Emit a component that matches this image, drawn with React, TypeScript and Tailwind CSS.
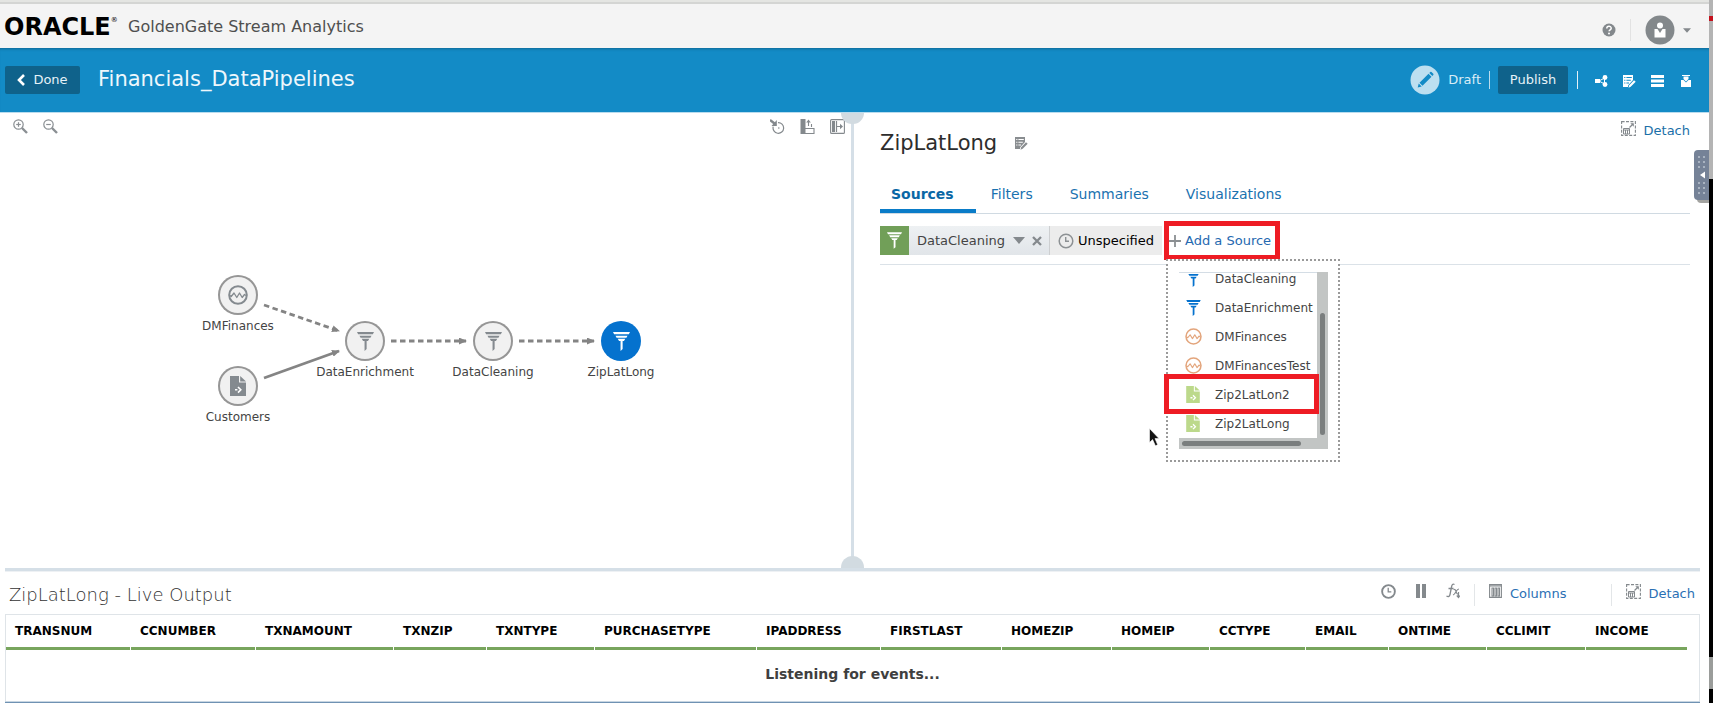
import type { ReactNode } from 'react';

type NodeKind = 'stream' | 'query' | 'file';

type PipelineNode = {
  label: string;
  kind: NodeKind;
  place: string;
  active?: boolean;
};

const nodes: PipelineNode[] = [
  { label: 'DMFinances', kind: 'stream', place: 'left-[178px] top-[162px]' },
  { label: 'Customers', kind: 'file', place: 'left-[178px] top-[253px]' },
  { label: 'DataEnrichment', kind: 'query', place: 'left-[305px] top-[208px]' },
  { label: 'DataCleaning', kind: 'query', place: 'left-[433px] top-[208px]' },
  { label: 'ZipLatLong', kind: 'query', place: 'left-[561px] top-[208px]', active: true },
];

const tabs = ['Sources', 'Filters', 'Summaries', 'Visualizations'];

const sources: { name: string; kind: NodeKind }[] = [
  { name: 'DataCleaning', kind: 'query' },
  { name: 'DataEnrichment', kind: 'query' },
  { name: 'DMFinances', kind: 'stream' },
  { name: 'DMFinancesTest', kind: 'stream' },
  { name: 'Zip2LatLon2', kind: 'file' },
  { name: 'Zip2LatLong', kind: 'file' },
];

const columns = [
  { name: 'TRANSNUM', share: 125 },
  { name: 'CCNUMBER', share: 125 },
  { name: 'TXNAMOUNT', share: 138 },
  { name: 'TXNZIP', share: 93 },
  { name: 'TXNTYPE', share: 108 },
  { name: 'PURCHASETYPE', share: 162 },
  { name: 'IPADDRESS', share: 124 },
  { name: 'FIRSTLAST', share: 121 },
  { name: 'HOMEZIP', share: 110 },
  { name: 'HOMEIP', share: 98 },
  { name: 'CCTYPE', share: 96 },
  { name: 'EMAIL', share: 83 },
  { name: 'ONTIME', share: 98 },
  { name: 'CCLIMIT', share: 99 },
  { name: 'INCOME', share: 102 },
];
const shareTotal = columns.reduce((sum, c) => sum + c.share, 0);

function Funnel({ className }: { className: string }) {
  return (
    <svg viewBox="0 0 18 20" className={className} fill="currentColor" aria-hidden="true">
      <path d="M0 0h18l-1.2 2.4H1.2zM2.6 3.8h12.8l-1.2 2.2H3.8zM5 7.2h8l-1.4 2.2h-1.4V18l-2.2 2V9.4H6.4z" />
    </svg>
  );
}

function Wave({ className, ring = 2 }: { className: string; ring?: number }) {
  return (
    <svg viewBox="0 0 20 20" className={className} fill="none" stroke="currentColor" aria-hidden="true">
      <circle cx="10" cy="10" r="8.8" strokeWidth={ring} />
      <path d="M2 10.5l1.2 1 2.8-3.5 2.8 4.5 2.7-4.5 2.7 4.5 2.3-3 1.5 1" strokeWidth="1.3" strokeLinejoin="round" />
    </svg>
  );
}

function FileMark({ className }: { className: string }) {
  return (
    <svg viewBox="0 0 16 20" className={className} aria-hidden="true">
      <path d="M0 0h9v6.5h7V20H0z" fill="currentColor" />
      <path d="M10.2 0L16 5.4h-5.8z" fill="currentColor" />
      <path d="M5 13.8h2.400M8 11l2.800 2.800L8 16.600" fill="none" stroke="#fff" strokeWidth="1.6" />
    </svg>
  );
}

function Clock({ className, ring = 1.5 }: { className: string; ring?: number }) {
  return (
    <svg viewBox="0 0 16 16" className={className} fill="none" stroke="currentColor" aria-hidden="true">
      <circle cx="8" cy="8" r="6.8" strokeWidth={ring} />
      <path d="M7.7 4v4.300H11" strokeWidth="1.4" />
    </svg>
  );
}

function Caret({ className }: { className: string }) {
  return (
    <svg viewBox="0 0 12 7" className={className} fill="currentColor" aria-hidden="true">
      <path d="M0 0h12L6 7z" />
    </svg>
  );
}

function Magnifier({ plus }: { plus?: boolean }) {
  return (
    <svg viewBox="0 0 15 15" className="size-[15px]" fill="none" stroke="#8a8f93" aria-hidden="true">
      <circle cx="5.5" cy="5.5" r="4.7" strokeWidth="1.2" />
      <path d="M3.200 5.500h4.600" strokeWidth="1.2" />
      {plus && <path d="M5.500 3.200v4.600" strokeWidth="1.2" />}
      <path d="M9 9l5 5" strokeWidth="2.4" />
    </svg>
  );
}

function DetachMark() {
  return (
    <svg viewBox="0 0 15 15" className="size-[15px]" fill="none" stroke="#84898d" aria-hidden="true">
      <rect x=".6" y=".6" width="13.8" height="13.8" strokeWidth="1.1" strokeDasharray="3 1.4" />
      <path d="M2.500 7.500h6v5.500h-6zM2.500 9h6M4.500 9v4M6.500 9v4" strokeWidth="1" />
      <path d="M8.500 6.500L12 3" strokeWidth="1.3" />
      <path d="M9.300 2.300h3.500v3.500z" fill="#84898d" stroke="none" />
    </svg>
  );
}

function NoteEdit({ className }: { className: string }) {
  return (
    <svg viewBox="0 0 13 13" className={className} aria-hidden="true">
      <path fillRule="evenodd" fill="currentColor" d="M0 0h10v5L5 10.500V12H0zM1.200 2v1h1.200V2zM3.400 2v1h5.400V2zM1.200 4.800v1h1.200v-1zM3.400 4.800v1h4.400v-1zM1.200 7.600v1h1.200v-1zM3.400 7.600v1H6v-1z" />
      <path fill="currentColor" d="M11 5.200l1.700 1.600-5 5-2.200.9.700-2.400z" />
    </svg>
  );
}

function IconButton({ label, className = '', children }: { label: string; className?: string; children: ReactNode }) {
  return (
    <button type="button" aria-label={label} className={`flex shrink-0 items-center justify-center ${className}`}>
      {children}
    </button>
  );
}

function Header() {
  return (
    <header className="flex h-11 items-center justify-between bg-[#f4f4f4] pr-[18px] pl-1">
      <div className="flex items-center pt-[2px]">
        <div className="flex w-[124px] items-start text-black">
          <span className="text-[24px] leading-6 font-bold">ORACLE</span>
          <span className="text-[7px] leading-[10px]">®</span>
        </div>
        <span className="text-[16px] leading-6 text-[#4f4f4f]">GoldenGate Stream Analytics</span>
      </div>
      <div className="flex items-center pt-2">
        <IconButton label="Help">
          <svg viewBox="0 0 14 14" className="size-[14px]" aria-hidden="true">
            <circle cx="7" cy="7" r="6.5" fill="#83888c" />
            <path d="M4.800 5.500c0-3 4.400-2.800 4.400-.3 0 1.700-2.100 1.500-2.100 3.100" fill="none" stroke="#fff" strokeWidth="1.5" />
            <circle cx="7" cy="10.5" r="1" fill="#fff" />
          </svg>
        </IconButton>
        <span className="mx-[14px] h-[22px] w-px bg-[#e2e2e2]" />
        <button type="button" aria-label="Account" className="flex items-center gap-2 text-[#84898c]">
          <svg viewBox="0 0 30 30" className="size-[30px]" aria-hidden="true">
            <circle cx="15" cy="15" r="14.5" fill="#83888b" />
            <circle cx="15" cy="10.5" r="3" fill="#fff" />
            <path d="M9.500 14h3l2.500 4 2.500-4h3v8.500h-11z" fill="#fff" />
          </svg>
          <Caret className="h-[5px] w-2" />
        </button>
      </div>
    </header>
  );
}

function TitleBar() {
  return (
    <div className="flex h-[65px] items-center justify-between border-b border-[#b9dcee] bg-[#138bc6] pr-4 pl-[5px] text-white shadow-[inset_0_3px_3px_-2px_rgba(0,0,0,0.25)]">
      <div className="flex items-center gap-[18px]">
        <button type="button" className="flex h-7 w-[75px] items-center justify-center gap-2 rounded-[2px] bg-[#0f628b] text-[13px] leading-4 text-[#e6f2f8]">
          <svg viewBox="0 0 8 12" className="h-3 w-2" fill="none" stroke="#fff" strokeWidth="2.6" aria-hidden="true">
            <path d="M7 1L2 6l5 5" />
          </svg>
          Done
        </button>
        <h1 className="pb-[2px] text-[21px] leading-7 text-[#eef7fc]">Financials_DataPipelines</h1>
      </div>
      <div className="flex items-center">
        <svg viewBox="0 0 30 30" className="size-[30px]" aria-hidden="true">
          <circle cx="15" cy="15" r="14.5" fill="#bcdff0" />
          <path d="M18.500 8.700l3 3-9 9-3-3zM19.300 7.900l1-1q.6-.5 1.200 0l1.800 1.800q.5.600 0 1.200l-1 1zM8.700 18.500l3 3-4 1z" fill="#138bc6" />
        </svg>
        <span className="ml-2 text-[13px] leading-4 text-[#d9edf7]">Draft</span>
        <span className="ml-2 h-[18px] w-px bg-[#b9dcee]" />
        <button type="button" className="ml-2 h-7 w-[70px] rounded-[2px] bg-[#0f628b] text-[13px] leading-4 text-[#e6f2f8]">
          Publish
        </button>
        <span className="mr-[17px] ml-[9px] h-[18px] w-px bg-[#e3f1f8]" />
        <div className="flex items-center gap-[15px] pt-[2px]">
          <IconButton label="Topology">
            <svg viewBox="0 0 13 12" className="h-3 w-[13px]" fill="#fff" aria-hidden="true">
              <path d="M0 4h5v4H0z" />
              <path d="M4 6l5.500-3M4 6l5.500 3M9.500 3v6" stroke="#fff" strokeWidth="1" fill="none" />
              <circle cx="10" cy="2.5" r="2.4" />
              <circle cx="10" cy="9.5" r="2.4" />
            </svg>
          </IconButton>
          <IconButton label="Edit notes">
            <NoteEdit className="size-[13px]" />
          </IconButton>
          <IconButton label="List">
            <svg viewBox="0 0 13 12" className="h-3 w-[13px]" fill="#fff" aria-hidden="true">
              <path d="M0 0h13v3H0zM0 4.500h13v3H0zM0 9h13v3H0z" />
            </svg>
          </IconButton>
          <IconButton label="Archive">
            <svg viewBox="0 0 10 12" className="mx-[2px] h-3 w-[10px]" fill="#fff" aria-hidden="true">
              <path d="M1 0h8v1H1zM2.500 1.500h5V4l-2.500 2.500L2.500 4zM0 5h2.500L5 7.500 7.500 5H10v7H0z" />
            </svg>
          </IconButton>
        </div>
      </div>
    </div>
  );
}

function Pipeline() {
  return (
    <section aria-label="Pipeline" className="relative">
      <div className="flex justify-between pt-[6px] pr-[6px] pl-[13px]">
        <div className="flex gap-[15px]">
          <IconButton label="Zoom in">
            <Magnifier plus />
          </IconButton>
          <IconButton label="Zoom out">
            <Magnifier />
          </IconButton>
        </div>
        <div className="flex gap-[15px] text-[#84898d]">
          <IconButton label="Reset view">
            <svg viewBox="0 0 15 15" className="size-[15px]" fill="none" stroke="currentColor" aria-hidden="true">
              <path d="M8 3.700a5.300 5.300 0 1 1-4.800 4" strokeWidth="1.2" />
              <path d="M0 1l4.500 3.500" strokeWidth="2.4" />
              <path d="M6.800 1v6H1.500z" fill="currentColor" stroke="none" />
              <circle cx="8.8" cy="9" r=".8" fill="currentColor" stroke="none" />
            </svg>
          </IconButton>
          <IconButton label="Align">
            <svg viewBox="0 0 15 15" className="size-[15px]" fill="none" stroke="currentColor" aria-hidden="true">
              <path d="M.5 0H5.500v15H.5z" fill="currentColor" stroke="none" />
              <path d="M5 9.500h9v5H5M8.500 2v5M11.500 5v3" strokeWidth="1.1" />
              <path d="M8.500.5l2.300 3H6.200z" fill="currentColor" stroke="none" />
            </svg>
          </IconButton>
          <IconButton label="Collapse panel">
            <svg viewBox="0 0 15 15" className="size-[15px]" fill="none" stroke="currentColor" aria-hidden="true">
              <rect x=".6" y=".6" width="13.8" height="13.8" rx="1" strokeWidth="1.1" />
              <path d="M2 2h3v11H2z" fill="currentColor" stroke="none" />
              <path d="M6.500 2v11M7 7.500h4" strokeWidth="1.2" />
              <path d="M10 4.800l3 2.700-3 2.700z" fill="currentColor" stroke="none" />
            </svg>
          </IconButton>
        </div>
      </div>

      <svg className="absolute top-0 left-0 h-[400px] w-[700px]" viewBox="0 0 700 400" fill="none" stroke="#848484" strokeWidth="2.8" aria-hidden="true">
        <defs>
          <marker id="arrow" viewBox="0 0 8 7" refX="7" refY="3.5" markerWidth="8" markerHeight="7" markerUnits="userSpaceOnUse" orient="auto">
            <path d="M0 0l8 3.500L0 7z" fill="#848484" stroke="none" />
          </marker>
        </defs>
        <path d="M264 192l75 26" strokeDasharray="5.5 3.5" markerEnd="url(#arrow)" />
        <path d="M264 265l75-27" markerEnd="url(#arrow)" />
        <path d="M391 228h75" strokeDasharray="5.5 3.5" markerEnd="url(#arrow)" />
        <path d="M519 228h75" strokeDasharray="5.5 3.5" markerEnd="url(#arrow)" />
      </svg>

      {nodes.map((node) => (
        <button key={node.label} type="button" className={`absolute flex w-[120px] flex-col items-center gap-[3px] ${node.place}`}>
          <span
            className={
              node.active
                ? 'flex size-10 items-center justify-center rounded-full bg-[#0572ce] text-white'
                : 'flex size-10 items-center justify-center rounded-full bg-[#f1f1f1] text-[#848a8f] ring-2 ring-[#868686]/85 ring-inset'
            }
          >
            {node.kind === 'query' && <Funnel className="h-[19px] w-[17px]" />}
            {node.kind === 'stream' && <Wave className="size-5" />}
            {node.kind === 'file' && <FileMark className="h-5 w-4" />}
          </span>
          <span className="text-[12px] leading-4 whitespace-nowrap text-[#444]">{node.label}</span>
        </button>
      ))}
    </section>
  );
}

function SourceMenu() {
  return (
    <div className="absolute top-[38px] left-[2px] z-10 w-[174px] border-2 border-dotted border-[#9a9a9a] bg-white p-[11px] pr-[10px]">
      <div className="flex">
        <ul className="flex h-[166px] min-w-0 flex-1 flex-col justify-end overflow-hidden border-t border-[#d4dde5]">
          {sources.map((source) => (
            <li key={source.name} className="shrink-0">
              <button type="button" className="flex h-[29px] w-full items-center text-[12px] leading-4 text-[#444]">
                <span className="mr-2 flex w-7 shrink-0 items-center justify-center">
                  {source.kind === 'query' && <Funnel className="h-4 w-[15px] text-[#0572ce]" />}
                  {source.kind === 'stream' && <Wave className="size-[17px] text-[#e3a57c]" ring={1.8} />}
                  {source.kind === 'file' && <FileMark className="h-[17px] w-[14px] text-[#bcd98b]" />}
                </span>
                {source.name}
              </button>
            </li>
          ))}
        </ul>
        <div className="flex w-[11px] items-end justify-center bg-[#c2c5c4] pb-[3px]">
          <div className="h-[122px] w-[5px] rounded-full bg-[#7a7e7e]" />
        </div>
      </div>
      <div className="flex h-[11px] items-center bg-[#c2c5c4] pl-[3px]">
        <div className="h-[5px] w-[119px] rounded-full bg-[#7a7e7e]" />
      </div>
      <span className="absolute top-[113px] left-[-4px] h-10 w-[155px] border-[5px] border-[#ee1c24]" />
      <svg viewBox="0 0 10 19" className="absolute top-[167px] left-[-19px] h-[19px] w-[10px]" aria-hidden="true">
        <path d="M.5.5v14L3.600 11.600l2.800 6.200 2.300-1L6 10.600h4z" fill="#111" stroke="#fff" strokeWidth=".6" />
      </svg>
    </div>
  );
}

function StageEditor() {
  return (
    <section aria-label="Stage" className="flex flex-col pr-[19px] pl-[26px]">
      <div className="flex items-start justify-between">
        <div className="flex items-center gap-[18px] pt-4">
          <h2 className="text-[21px] leading-7 text-[#2d2d2d]">ZipLatLong</h2>
          <IconButton label="Rename stage" className="text-[#898d90]">
            <NoteEdit className="size-[13px]" />
          </IconButton>
        </div>
        <button type="button" className="flex gap-2 pt-2 text-[13px] leading-5 text-[#1a6fa8]">
          <DetachMark />
          Detach
        </button>
      </div>

      <div role="tablist" className="mt-5 flex gap-1 border-b border-[#d0dae2]">
        {tabs.map((tab, index) => (
          <button
            key={tab}
            type="button"
            role="tab"
            aria-selected={index === 0}
            className={
              index === 0
                ? 'border-b-4 border-[#0a7cc8] pt-2 pr-[22px] pb-[6px] pl-[11px] text-[14px] leading-[18px] font-bold text-[#0967a5]'
                : 'border-b-4 border-transparent pt-2 pr-[22px] pb-[6px] pl-[11px] text-[14px] leading-[18px] text-[#1a72b0]'
            }
          >
            {tab}
          </button>
        ))}
      </div>

      <div className="flex h-[51px] items-center border-b border-[#dbe2e8] pt-[3px] text-[13px] leading-4">
        <div className="flex h-[29px] items-center bg-linear-to-b from-[#eef1f3] to-[#e1e5e9] text-[#444]">
          <span className="flex size-[29px] items-center justify-center bg-[#719f58] text-white">
            <Funnel className="h-[17px] w-[15px]" />
          </span>
          <span className="pl-2">DataCleaning</span>
          <IconButton label="Source options" className="ml-2 text-[#84898d]">
            <Caret className="h-[7px] w-3" />
          </IconButton>
          <IconButton label="Remove source" className="mr-[7px] ml-[7px] text-[#84898d]">
            <svg viewBox="0 0 10 10" className="size-[10px]" fill="none" stroke="currentColor" strokeWidth="2.3" aria-hidden="true">
              <path d="M1 1l8 8M9 1L1 9" />
            </svg>
          </IconButton>
        </div>
        <button type="button" className="flex h-[29px] items-center gap-1 border-l border-[#cdcfd1] bg-[#ececec] px-2 text-black">
          <Clock className="size-4 text-[#8d9194]" />
          Unspecified
        </button>
        <div className="relative ml-[2px]">
          <button type="button" className="flex h-[39px] w-[116px] items-center gap-1 border-[5px] border-[#ee1c24] text-[#2569b0]">
            <svg viewBox="0 0 12 12" className="size-3 shrink-0" fill="none" stroke="#8b8f92" strokeWidth="1.8" aria-hidden="true">
              <path d="M6 0v12M0 6h12" />
            </svg>
            <span className="whitespace-nowrap">Add a Source</span>
          </button>
          <SourceMenu />
        </div>
      </div>
    </section>
  );
}

function LiveOutput() {
  return (
    <section aria-label="Live output" className="mr-[9px] ml-[5px]">
      <div className="flex h-[43px] justify-between border-t border-[#eef1f4] pr-[5px] pl-1">
        <h2 className="pt-[11px] text-[18px] leading-6 font-extralight text-[#333]">ZipLatLong - Live Output</h2>
        <div className="flex pt-3 text-[#84898d]">
          <IconButton label="Time" className="h-[14px]">
            <Clock className="size-[15px]" ring={2} />
          </IconButton>
          <IconButton label="Pause" className="ml-5 h-[14px]">
            <svg viewBox="0 0 10 14" className="h-[14px] w-[10px]" fill="currentColor" aria-hidden="true">
              <path d="M0 0h4v14H0zM6 0h4v14H6z" />
            </svg>
          </IconButton>
          <IconButton label="Expression builder" className="ml-5 h-[14px]">
            <svg viewBox="0 0 14 16" className="h-4 w-[14px]" fill="none" stroke="currentColor" aria-hidden="true">
              <path d="M8.500 1.500c-2-1-2.600.5-3 2.500L4 11.500c-.4 2-1.500 2.500-3.500 1.700M2.500 5.500h5" strokeWidth="1.3" />
              <path d="M7.500 6.500q2-.5 2.500 2t2.500 3M13 6q-1.500 0-3 2.800T7 12M12.500 9v5M10.800 12.500l1.700 2 1.500-2" strokeWidth="1.2" />
            </svg>
          </IconButton>
          <span className="ml-[14px] h-[22px] w-px bg-[#e3e6e8]" />
          <button type="button" className="ml-[14px] flex h-5 gap-2 text-[13px] leading-5 text-[#2a70b4]">
            <svg viewBox="0 0 13 14" className="h-[14px] w-[13px] shrink-0" fill="none" stroke="#84898d" aria-hidden="true">
              <path d="M.6.600h11.800v12.800H.6zM.6 2h11.800M3 4h1.500v8H3zM6 4h1.500v8H6zM9 4h1.500v8H9z" strokeWidth="1.1" />
            </svg>
            Columns
          </button>
          <span className="ml-11 h-[22px] w-px bg-[#e3e6e8]" />
          <button type="button" className="ml-[14px] flex h-5 gap-2 text-[13px] leading-5 text-[#2a70b4]">
            <DetachMark />
            Detach
          </button>
        </div>
      </div>
      <div className="border border-b-0 border-[#dfe4e8] pr-[11px]">
        <table className="w-full table-fixed border-collapse">
          <colgroup>
            {columns.map((column) => (
              <col key={column.name} style={{ width: `${(column.share / shareTotal) * 100}%` }} />
            ))}
          </colgroup>
          <thead>
            <tr>
              {columns.map((column) => (
                <th key={column.name} scope="col" className="p-0 text-left text-[12px] leading-8 font-bold text-black">
                  <div className="mr-px border-b-[3px] border-[#78a55d] pl-[9px]">{column.name}</div>
                </th>
              ))}
            </tr>
          </thead>
          <tbody>
            <tr>
              <td colSpan={columns.length} className="h-[51px] pb-[3px] pl-[11px] text-center text-[14px] leading-5 font-bold text-[#3f3f3f]">
                Listening for events...
              </td>
            </tr>
          </tbody>
        </table>
      </div>
      <div className="h-[2px] border-t border-[#c8d6e2] bg-[#6f92b3]" />
    </section>
  );
}

export default function App() {
  return (
    <div className="flex min-h-screen bg-white [font-family:'DejaVu_Sans',Verdana,sans-serif]">
      <main className="flex min-w-0 flex-1 flex-col">
        <div className="h-1 border-b-2 border-[#d4d5d3] bg-[#e4e5e2]" />
        <Header />
        <TitleBar />
        <div className="relative grid flex-1 grid-cols-[minmax(0,851fr)_3px_minmax(0,855fr)]">
          <Pipeline />
          <div className="relative bg-[#d5dfe7]">
            <span className="absolute top-0 left-[-10px] h-[11px] w-[23px] rounded-b-full bg-[#d2dbe1]" />
            <span className="absolute bottom-0 left-[-10px] h-3 w-[23px] rounded-t-full bg-[#d2dbe1]" />
          </div>
          <StageEditor />
          <button
            type="button"
            aria-label="Open side panel"
            className="absolute top-[37px] right-0 flex h-[50px] w-[15px] items-center justify-center rounded-l-[4px] bg-[#758297] shadow-[3px_3px_0_#a3a3a0]"
          >
            <svg viewBox="0 0 15 50" className="h-[50px] w-[15px]" aria-hidden="true">
              <path d="M5 6v14M10 6v14M5 32v14M10 32v14" stroke="#a9b3c1" strokeWidth="2" strokeDasharray="2 3" />
              <path d="M6 25l5-3.500v7z" fill="#fff" />
            </svg>
          </button>
        </div>
        <div className="mr-[9px] ml-[5px] h-[3px] bg-[#d5dfe7]" />
        <LiveOutput />
      </main>
      <aside className="relative z-10 flex w-1 shrink-0 flex-col overflow-hidden bg-black">
        <div className="h-[179px] bg-[#b4b4b4] pt-4">
          <div className="h-[5px] bg-[#c4101c]" />
        </div>
        <div className="mt-auto mb-[14px] h-8 bg-[#9a9c9a]" />
      </aside>
    </div>
  );
}
